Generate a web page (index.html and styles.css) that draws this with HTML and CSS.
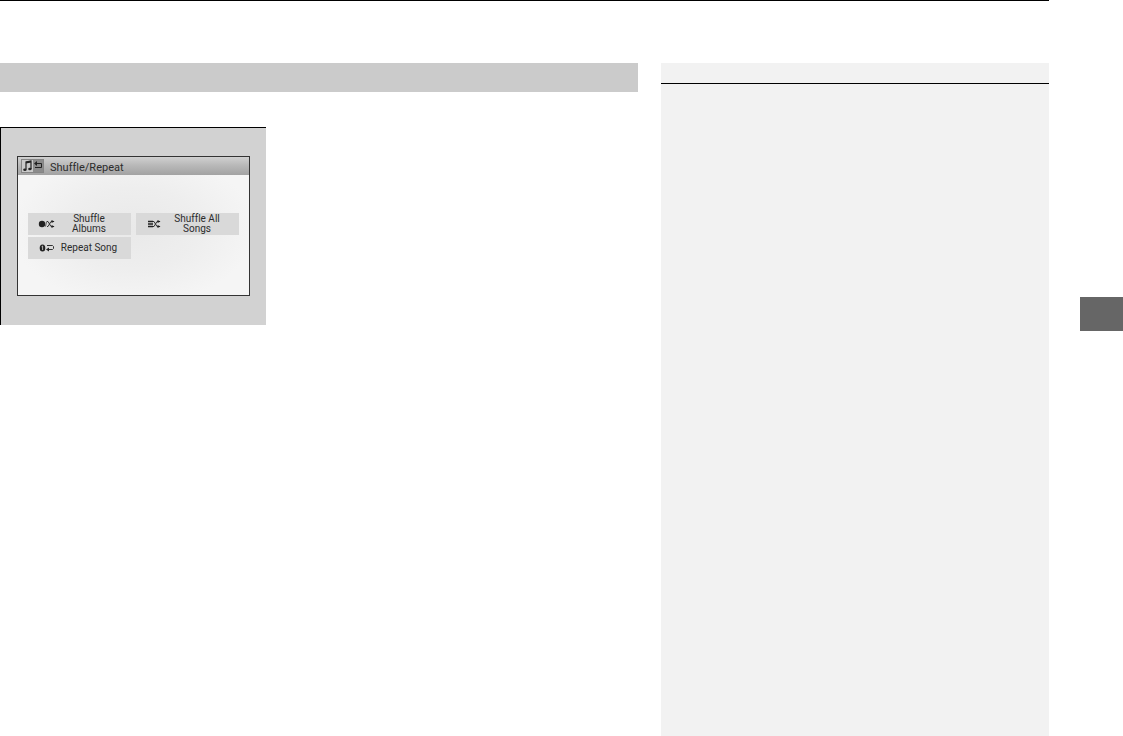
FILE: index.html
```html
<!DOCTYPE html>
<html lang="en">
<head>
    <meta charset="UTF-8">
    <meta name="viewport" content="width=device-width, initial-scale=1.0">
    <title>Shuffle/Repeat</title>
    <link rel="stylesheet" href="styles.css">
</head>
<body>
    <div class="page">
        <div class="sheet">
            <main class="content">
                <div class="section-bar"></div>
                <div class="figure">
                    <div class="screen">
                        <div class="screen-head">
                            <svg class="head-icon" viewBox="0 0 23 14" width="23" height="14">
                                <rect x="0.5" y="0.5" width="22" height="13" fill="#c9c9c9" stroke="#858585"/>
                                <rect x="12" y="1" width="10" height="12" fill="#8b8b8b"/>
                                <path d="M5 10.500V3l5-1v8" fill="none" stroke="#222" stroke-width="1.2"/>
                                <path d="M5 3.600l5-1" stroke="#222" stroke-width="1.6"/>
                                <ellipse cx="3.9" cy="10.8" rx="1.7" ry="1.3" fill="#222"/>
                                <ellipse cx="8.9" cy="10" rx="1.7" ry="1.3" fill="#222"/>
                                <path d="M14 4.500h6.500v4H14" fill="none" stroke="#222"/>
                                <path d="M13 4.500l3-2.500v5z" fill="#222"/>
                            </svg>
                            <span>Shuffle/Repeat</span>
                        </div>
                        <div class="options">
                            <button type="button" class="option">
                                <svg viewBox="0 0 17 8" width="17" height="8">
                                    <circle cx="4" cy="4" r="3.2" fill="#222"/>
                                    <path d="M7.500 6.500l1-5" stroke="#555"/>
                                    <path d="M9 1.500h1l3 5h3M9 6.500h1l3-5h3" fill="none" stroke="#333"/>
                                    <path d="M13.500 0l3 1.500-3 1.500zM13.500 5l3 1.500-3 1.500z" fill="#222"/>
                                </svg>
                                <span>Shuffle<br>Albums</span>
                            </button>
                            <button type="button" class="option">
                                <svg viewBox="0 0 17 8" width="17" height="8">
                                    <path d="M2 1.500h5M2 4h5M2 6.500h5" stroke="#222" stroke-width="1.5"/>
                                    <path d="M7 1.500h1l3 5h3M7 6.500h1l3-5h3" fill="none" stroke="#333"/>
                                    <path d="M11.500 0l3 1.500-3 1.500zM11.500 5l3 1.500-3 1.500z" fill="#222"/>
                                </svg>
                                <span>Shuffle All<br>Songs</span>
                            </button>
                            <button type="button" class="option">
                                <svg viewBox="0 0 17 8" width="17" height="8">
                                    <ellipse cx="4.500" cy="4" rx="2.8" ry="3.5" fill="#222"/>
                                    <path d="M3.600 2.700l1-.7v4" fill="none" stroke="#ddd" stroke-width="0.8"/>
                                    <path d="M9 1.500h5.500l1 1v2l-1 1H9" fill="none" stroke="#333"/>
                                    <path d="M8 5.500l3-2v4z" fill="#222"/>
                                </svg>
                                <span>Repeat Song</span>
                            </button>
                        </div>
                    </div>
                </div>
            </main>
            <aside class="notes">
                <div class="notes-head"></div>
            </aside>
        </div>
        <div class="margin">
            <div class="tab"></div>
        </div>
    </div>
</body>
</html>
```
FILE: styles.css
```css
body{
    margin:0;
    background-color:#fff;
    font-family:Roboto, "Liberation Sans", sans-serif;
    font-variant-ligatures:none;
    color:#2c2c2c;
}
.page{
    display:flex;
    min-height:100vh;
}
.sheet{
    flex:1;
    display:flex;
    gap:23px;
    border-top:1px solid #000;
    padding-top:62px;
}
.content{
    flex:1;
}
.section-bar{
    height:29px;
    background-color:#cbcbcb;
}
.figure{
    width:fit-content;
    margin-top:35px;
    padding:28px 16px 29px;
    border-top:1px solid #000;
    border-left:1px solid #000;
    background-color:#d2d2d2;
}
.screen{
    border:1px solid #333;
    background:radial-gradient(ellipse at 50% 52%, #e9e9e9 0%, #eeeeee 40%, #f5f5f5 75%);
}
.screen-head{
    display:flex;
    align-items:center;
    gap:6px;
    height:18px;
    padding-left:3px;
    background:linear-gradient(#d0d0d0, #b9b9b9 45%, #a2a2a2);
    font-size:11px;
}
.screen-head span{
    padding-top:2px;
}
.options{
    display:grid;
    grid-template-columns:103px 103px;
    grid-auto-rows:22px;
    gap:2px 5px;
    padding:38px 10px 36px;
}
.option{
    display:grid;
    grid-template-columns:17px 1fr;
    align-items:center;
    gap:2px;
    padding:0 10px;
    border:0;
    background-color:#d9d9d9;
    color:inherit;
    font-family:inherit;
    font-variant-ligatures:none;
    font-size:10px;
    line-height:10px;
    text-align:center;
    cursor:pointer;
}
/* chapter tab on the outer edge */
.margin{
    width:74px;
    padding-top:297px;
}
.tab{
    height:34px;
    margin-left:31px;
    background-color:#666;
}
.notes{
    width:37%;
    background-color:#f2f2f2;
}
.notes-head{
    height:20px;
    border-bottom:1px solid #000;
}
```
